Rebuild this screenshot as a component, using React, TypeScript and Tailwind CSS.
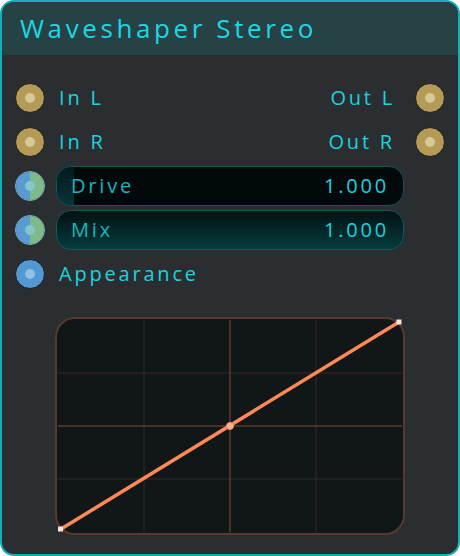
import React from 'react';

type SocketKind = 'audio' | 'mod' | 'appearance';

function Socket({ kind }: { kind: SocketKind }) {
  if (kind === 'mod') {
    return (
      <div className="relative w-[30px] h-[30px] shrink-0 rounded-full border-[1.5px] border-[#7fb6c4] overflow-hidden flex">
        <div className="w-1/2 h-full bg-[#5b9bd4]" />
        <div className="w-1/2 h-full bg-[#7dbb8b]" />
        <div className="absolute left-1/2 top-1/2 -translate-x-1/2 -translate-y-1/2 w-[10px] h-[10px] rounded-full bg-[#86c7c9]" />
      </div>
    );
  }
  const fill = kind === 'audio' ? 'bg-[#b39a55]' : 'bg-[#5298d3]';
  const dot = kind === 'audio' ? 'bg-[#d8c898]' : 'bg-[#93c1e6]';
  return (
    <div className={`w-[30px] h-[30px] shrink-0 rounded-full border-[1.5px] border-[#1b1c1c] flex items-center justify-center ${fill}`}>
      <div className={`w-[10px] h-[10px] rounded-full ${dot}`} />
    </div>
  );
}

function Slider({ label, value, filled }: { label: string; value: string; filled: boolean }) {
  return (
    <div
      className={`relative flex-1 h-[40px] rounded-[15px] border border-[#0c5960] overflow-hidden flex items-center justify-between pl-[14px] pr-[14px] ${
        filled ? 'bg-gradient-to-b from-[#021112] to-[#053c3d]' : 'bg-[#02090a]'
      }`}
    >
      {!filled && (
        <div className="absolute left-0 top-0 h-full w-[17px] rounded-l-[14px] bg-gradient-to-b from-[#031a1c] to-[#0a3437]" />
      )}
      <span className="relative text-[20px] tracking-[2.8px] text-[#13b6c3]">{label}</span>
      <span className="relative text-[20px] tracking-[2.8px] text-[#17d3e0]">{value}</span>
    </div>
  );
}

function Curve() {
  const grid = 'stroke-[#3a2a23]';
  return (
    <div className="relative w-[350px] h-[218px] ml-[53px] mt-[21px] rounded-[20px] border-2 border-[#573a2c] bg-[#111618]">
      <svg className="absolute left-0 top-0 overflow-visible" width="346" height="214" viewBox="0 0 346 214">
        <line x1="87" y1="1" x2="87" y2="213" className={grid} strokeWidth="1" />
        <line x1="259" y1="1" x2="259" y2="213" className={grid} strokeWidth="1" />
        <line x1="1" y1="54" x2="345" y2="54" className={grid} strokeWidth="1" />
        <line x1="1" y1="160" x2="345" y2="160" className={grid} strokeWidth="1" />
        <line x1="173" y1="1" x2="173" y2="213" stroke="#5e3b2b" strokeWidth="1.5" />
        <line x1="1" y1="107" x2="345" y2="107" stroke="#5e3b2b" strokeWidth="1.5" />
        <line x1="4" y1="210" x2="342" y2="3" stroke="#ff8955" strokeWidth="3.5" strokeLinecap="round" />
        <circle cx="173" cy="107" r="3.5" fill="#f9b59a" stroke="#ff8955" strokeWidth="1" />
        <rect x="1" y="207.5" width="5" height="5" fill="#fde3d6" />
        <rect x="339.5" y="0.5" width="5" height="5" fill="#fde3d6" />
      </svg>
    </div>
  );
}

export default function App() {
  return (
    <div
      className="w-[460px] h-[556px] rounded-[14px] border-2 border-[#14aebb] bg-[#2a2e30] overflow-hidden flex flex-col"
      style={{ fontFamily: '"Open Sans", "DejaVu Sans", sans-serif' }}
    >
      {/* Header */}
      <div className="h-[53px] shrink-0 bg-[#264245] flex items-center pl-[18px]">
        <span className="text-[26px] tracking-[3.6px] text-[#1ad8e6]">Waveshaper Stereo</span>
      </div>

      {/* Ports */}
      <div className="pt-[21px] px-[13px] flex flex-col">
        <div className="h-[44px] flex items-center">
          <Socket kind="audio" />
          <span className="ml-[14px] text-[20px] tracking-[2.8px] text-[#19d3e1]">In L</span>
          <span className="ml-auto mr-[20px] text-[20px] tracking-[2.8px] text-[#19d3e1]">Out L</span>
          <Socket kind="audio" />
        </div>
        <div className="h-[44px] flex items-center">
          <Socket kind="audio" />
          <span className="ml-[14px] text-[20px] tracking-[2.8px] text-[#19d3e1]">In R</span>
          <span className="ml-auto mr-[20px] text-[20px] tracking-[2.8px] text-[#19d3e1]">Out R</span>
          <Socket kind="audio" />
        </div>
        <div className="h-[44px] flex items-center pr-[41px]">
          <Socket kind="mod" />
          <div className="ml-[11px] flex-1 flex">
            <Slider label="Drive" value="1.000" filled={false} />
          </div>
        </div>
        <div className="h-[44px] flex items-center pr-[41px]">
          <Socket kind="mod" />
          <div className="ml-[11px] flex-1 flex">
            <Slider label="Mix" value="1.000" filled />
          </div>
        </div>
        <div className="h-[44px] flex items-center">
          <Socket kind="appearance" />
          <span className="ml-[14px] text-[20px] tracking-[2.8px] text-[#19d3e1]">Appearance</span>
        </div>
      </div>

      <Curve />
    </div>
  );
}
